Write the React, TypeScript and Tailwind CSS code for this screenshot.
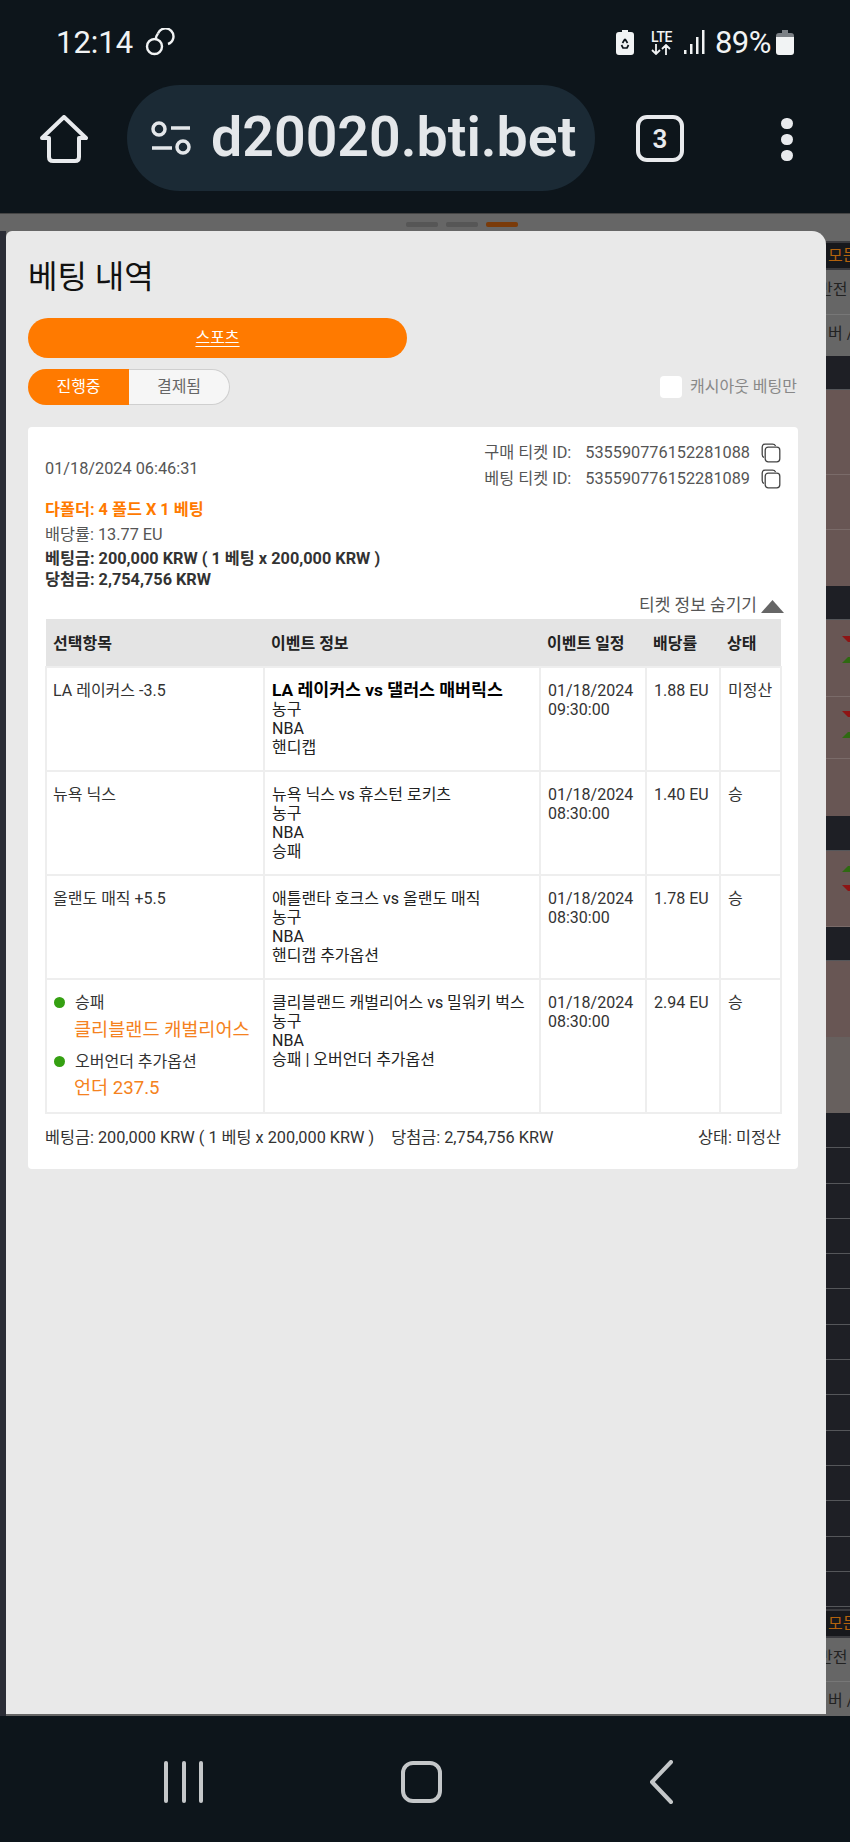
import React from "react";

const FONT = "font-['Roboto','Noto_Sans_CJK_KR',sans-serif]";

function CopyIcon() {
  return (
    <svg width="20" height="20" viewBox="0 0 20 20" fill="none" stroke="#444" strokeWidth="1.3">
      <path d="M3 14.5 C1.8 13.8 1.2 13 1.2 11.5 V4 C1.2 2.2 2.2 1.2 4 1.2 H11.5 C13 1.2 14 1.8 14.6 3" />
      <rect x="4.2" y="4.2" width="14.6" height="14.6" rx="3" />
    </svg>
  );
}

function Arrow({ dir }: { dir: "up" | "down" }) {
  return (
    <svg width="8" height="6" viewBox="0 0 8 6" className="block">
      {dir === "up" ? <path d="M0 6 L8 6 L8 0 L6 0 Z" fill="#2f6a12" /> : <path d="M0 0 L8 0 L8 6 L6 6 Z" fill="#8e1414" />}
    </svg>
  );
}

function StatusBar() {
  return (
    <div className="h-[82px] flex items-center pt-[2px] pl-[56px] pr-[56px] justify-between text-[#f1f3f4]">
      <div className="flex items-center gap-[12px]">
        <span className="text-[31px] leading-none">12:14</span>
        <svg width="30" height="28" viewBox="0 0 30 28" fill="none" stroke="#f1f3f4" strokeWidth="2.4">
          <circle cx="9.5" cy="18.5" r="7.5" />
          <path d="M13 5.5 A8 8 0 1 1 23 16" />
          <path d="M13 5.5 C11 8 10.8 9.5 11 11" />
        </svg>
      </div>
      <div className="flex items-center">
        <svg width="18" height="25" viewBox="0 0 18 25">
          <path d="M6 0h6v2h3a3 3 0 0 1 3 3v17a3 3 0 0 1-3 3H3a3 3 0 0 1-3-3V5a3 3 0 0 1 3-3h3z" fill="#f1f3f4" />
          <path d="M9 9l2.5 4M9 9l-2.5 4M5.5 15l1.5 3h4l1.500-3" stroke="#0d151b" strokeWidth="1.700" fill="none" />
        </svg>
        <div className="ml-[15px] w-[25px] flex flex-col items-center">
          <span className="text-[14px] leading-[14px] font-medium tracking-[-0.5px]">LTE</span>
          <svg width="22" height="11" viewBox="0 0 22 11" fill="none" stroke="#f1f3f4" strokeWidth="1.800">
            <path d="M6 0v10M2 6l4 4 4-4M16 11V1M12 5l4-4 4 4" />
          </svg>
        </div>
        <svg width="22" height="24" viewBox="0 0 22 24" fill="#f1f3f4" className="ml-[10px]">
          <rect x="0" y="20" width="2.500" height="4" />
          <rect x="6" y="14" width="2.500" height="10" />
          <rect x="12" y="7" width="2.500" height="17" />
          <rect x="18" y="0" width="2.500" height="24" />
        </svg>
        <span className="ml-[9px] text-[31px] leading-none tracking-[-0.5px]">89%</span>
        <svg width="18" height="25" viewBox="0 0 18 25" className="ml-[5px]">
          <path d="M6 0h6v3h3a3 3 0 0 1 3 3v1H0V6a3 3 0 0 1 3-3h3z" fill="#7b8085" />
          <path d="M0 7h18v15a3 3 0 0 1-3 3H3a3 3 0 0 1-3-3z" fill="#f1f3f4" />
        </svg>
      </div>
    </div>
  );
}

function UrlBar() {
  return (
    <div className="h-[109px] flex items-start pt-[3px]">
      <svg width="48" height="48" viewBox="0 0 48 48" fill="none" stroke="#e8eaed" strokeWidth="4" strokeLinejoin="round" className="ml-[40px] mt-[30px]">
        <path d="M2 23 L24 2 L46 23 H39 V42 Q39 46 35 46 H13 Q9 46 9 42 V23 Z" />
      </svg>
      <div className="ml-[39px] w-[468px] h-[106px] rounded-full bg-[#1b2a35] flex items-center pl-[24px]">
        <svg width="40" height="34" viewBox="0 0 40 34" fill="none" stroke="#e4e7ea" strokeWidth="3.500">
          <circle cx="8" cy="8" r="6" />
          <path d="M20 7h19M1 27h20" />
          <circle cx="32" cy="26" r="6" />
        </svg>
        <span className="ml-[20px] text-[55.500px] leading-none font-semibold text-[#e4e7ea]">d20020.bti.bet</span>
      </div>
      <div className="ml-[41px] mt-[30px] w-[48px] h-[47px] rounded-[11px] border-[4px] border-[#e8eaed] flex items-center justify-center text-[#e8eaed] text-[26px] font-semibold leading-none">
        3
      </div>
      <div className="ml-[97px] mt-[33px] flex flex-col gap-[5px]">
        <div className="w-[12px] h-[11px] rounded-full bg-[#e8eaed]" />
        <div className="w-[12px] h-[11px] rounded-full bg-[#e8eaed]" />
        <div className="w-[12px] h-[11px] rounded-full bg-[#e8eaed]" />
      </div>
    </div>
  );
}

function RightStrip() {
  const dark = "bg-[#1e1f25] border-b border-[#55565a] shrink-0";
  const brown = "bg-[#685654] border-b border-[#7a6b69] shrink-0";
  const band = (
    <div className="h-[29px] shrink-0 bg-[#17181c] border-y-2 border-[#3a3a3e] overflow-hidden whitespace-nowrap pl-[2px] text-[16px] leading-[25px] text-[#b3620d]">모든</div>
  );
  return (
    <div className="w-[24px] flex flex-col overflow-hidden bg-[#666]">
      <div className="h-[10px] shrink-0" />
      {band}
      <div className="h-[45px] shrink-0 border-b border-[#777] overflow-hidden whitespace-nowrap text-[16px] leading-[40px] text-[#222] -ml-[8px]">반전</div>
      <div className="h-[41px] shrink-0 overflow-hidden whitespace-nowrap text-[16px] leading-[38px] text-[#222] pl-[2px]">버 /</div>
      <div className={`h-[34px] ${dark}`} />
      <div className={`h-[85px] ${brown}`} />
      <div className={`h-[55px] ${brown}`} />
      <div className="h-[56px] shrink-0 bg-[#685654]" />
      <div className={`h-[34px] ${dark}`} />
      <div className={`h-[77px] ${brown} flex flex-col items-end gap-[15px] pt-[16px]`}>
        <Arrow dir="down" />
        <Arrow dir="up" />
      </div>
      <div className={`h-[62px] ${brown} flex flex-col items-end gap-[15px] pt-[14px]`}>
        <Arrow dir="down" />
        <Arrow dir="up" />
      </div>
      <div className="h-[57px] shrink-0 bg-[#685654]" />
      <div className={`h-[35px] ${dark}`} />
      <div className={`h-[76px] ${brown} flex flex-col items-end gap-[13px] pt-[15px]`}>
        <Arrow dir="up" />
        <Arrow dir="down" />
      </div>
      <div className={`h-[34px] ${dark}`} />
      <div className="h-[76px] shrink-0 bg-[#685654]" />
      <div className="h-[76px] shrink-0 bg-[#67605e]" />
      {Array.from({ length: 14 }).map((_, i) => (
        <div key={i} className={`h-[35.300px] ${dark}`} />
      ))}
      <div className="h-[2px] shrink-0 bg-[#1e1f25]" />
      {band}
      <div className="h-[44px] shrink-0 border-b border-[#777] overflow-hidden whitespace-nowrap text-[16px] leading-[40px] text-[#222] -ml-[8px]">반전</div>
      <div className="h-[34px] shrink-0 overflow-hidden whitespace-nowrap text-[16px] leading-[38px] text-[#222] pl-[2px]">버 /</div>
    </div>
  );
}

const TH = "bg-[#e4e4e4] h-[48px] px-[7px] pt-[2px] text-left text-[16px] font-bold text-[#222] align-middle";
const TD = "border-2 border-[#eeeeee] px-[7px] pt-[13px] align-top text-[16px] leading-[19px] text-[#333]";
const TD1 = "border-2 border-[#eeeeee] pl-[6px] pr-[7px] pt-[13px] align-top text-[16px] leading-[19px] text-[#333]";

function Row({ pick, title, bold, market, date, time, odds, status }: { pick: string; title: string; bold?: boolean; market: string; date: string; time: string; odds: string; status: string }) {
  return (
    <tr className="h-[104px]">
      <td className={TD1}>{pick}</td>
      <td className={TD}>
        <div className={bold ? "font-bold text-[17.300px] text-black whitespace-nowrap" : "text-[#222]"}>{title}</div>
        <div className="text-[#222]">농구</div>
        <div className="text-[#222]">NBA</div>
        <div className="text-[#222]">{market}</div>
      </td>
      <td className={TD}>
        <div>{date}</div>
        <div>{time}</div>
      </td>
      <td className={TD}>{odds}</td>
      <td className={TD}>{status}</td>
    </tr>
  );
}

function Ticket() {
  return (
    <div className="ml-[22px] w-[770px] h-[742px] bg-white rounded-[4px] mt-[22px] px-[17px] pt-[13px] shrink-0">
      <div className="flex justify-between items-center h-[52px]">
        <span className="pt-[6px] text-[16.300px] text-[#555]">01/18/2024 06:46:31</span>
        <div className="flex flex-col text-[16.300px] text-[#555] items-end">
          {[
            ["구매 티켓 ID:", "535590776152281088"],
            ["베팅 티켓 ID:", "535590776152281089"],
          ].map(([a, b]) => (
            <div key={b} className="h-[26px] flex items-center">
              <span>{a}</span>
              <span className="ml-[14px]">{b}</span>
              <span className="ml-[11px]">
                <CopyIcon />
              </span>
            </div>
          ))}
        </div>
      </div>
      <div className="mt-[6px] text-[16.300px]">
        <div className="h-[24px] leading-[24px] font-bold text-[#ff7a00]">다폴더: 4 폴드 X 1 베팅</div>
        <div className="h-[24px] leading-[25px] text-[#555]">배당률: 13.77 EU</div>
        <div className="h-[24px] leading-[25px] font-bold text-[#333]">베팅금: 200,000 KRW ( 1 베팅 x 200,000 KRW )</div>
        <div className="h-[22px] leading-[20px] font-bold text-[#333]">당첨금: 2,754,756 KRW</div>
      </div>
      <div className="h-[26px] mt-[1px] flex items-center justify-end text-[17px] text-[#555] -mr-[3px]">
        <span>티켓 정보 숨기기</span>
        <svg width="23" height="13" viewBox="0 0 23 13" className="ml-[4px]">
          <path d="M11.500 0 L23 13 H0 Z" fill="#666" />
        </svg>
      </div>
      <table className="table-fixed border-collapse w-[735px]">
        <thead>
          <tr>
            <th className={`${TH} w-[218px]`}>선택항목</th>
            <th className={`${TH} w-[276px]`}>이벤트 정보</th>
            <th className={`${TH} w-[106px]`}>이벤트 일정</th>
            <th className={`${TH} w-[74px]`}>배당률</th>
            <th className={`${TH} w-[61px]`}>상태</th>
          </tr>
        </thead>
        <tbody>
          <Row pick="LA 레이커스 -3.5" title="LA 레이커스 vs 댈러스 매버릭스" bold market="핸디캡" date="01/18/2024" time="09:30:00" odds="1.88 EU" status="미정산" />
          <Row pick="뉴욕 닉스" title="뉴욕 닉스 vs 휴스턴 로키츠" market="승패" date="01/18/2024" time="08:30:00" odds="1.40 EU" status="승" />
          <Row pick="올랜도 매직 +5.5" title="애틀랜타 호크스 vs 올랜도 매직" market="핸디캡 추가옵션" date="01/18/2024" time="08:30:00" odds="1.78 EU" status="승" />
          <tr className="h-[134px]">
            <td className={TD1}>
              <div className="flex items-center h-[19px] pl-[1px]">
                <span className="w-[11px] h-[11px] rounded-full bg-[#35a012]" />
                <span className="ml-[10px]">승패</span>
              </div>
              <div className="ml-[21px] mt-[6px] text-[18.600px] leading-[24px] text-[#f58220] whitespace-nowrap">클리블랜드 캐벌리어스</div>
              <div className="flex items-center h-[19px] mt-[10px] pl-[1px]">
                <span className="w-[11px] h-[11px] rounded-full bg-[#35a012]" />
                <span className="ml-[10px]">오버언더 추가옵션</span>
              </div>
              <div className="ml-[21px] mt-[5px] text-[18.600px] leading-[24px] text-[#f58220] whitespace-nowrap">언더 237.5</div>
            </td>
            <td className={TD}>
              <div className="text-[#222]">클리블랜드 캐벌리어스 vs 밀워키 벅스</div>
              <div className="text-[#222]">농구</div>
              <div className="text-[#222]">NBA</div>
              <div className="text-[#222]">승패 | 오버언더 추가옵션</div>
            </td>
            <td className={TD}>
              <div>01/18/2024</div>
              <div>08:30:00</div>
            </td>
            <td className={TD}>2.94 EU</td>
            <td className={TD}>승</td>
          </tr>
        </tbody>
      </table>
      <div className="h-[48px] flex items-center justify-between text-[16.300px] text-[#333]">
        <div className="flex gap-[17px]">
          <span>베팅금: 200,000 KRW ( 1 베팅 x 200,000 KRW )</span>
          <span>당첨금: 2,754,756 KRW</span>
        </div>
        <span>상태: 미정산</span>
      </div>
    </div>
  );
}

function Modal() {
  return (
    <div className="w-[820px] h-[1483px] bg-[#e9e9e9] rounded-tl-[6px] rounded-tr-[14px] flex flex-col">
      <h1 className="ml-[22px] mt-[23px] text-[32px] leading-[46px] font-normal text-[#111]">베팅 내역</h1>
      <div className="ml-[22px] mt-[18px] w-[379px] h-[40px] rounded-full bg-[#ff7a00] flex items-center justify-center text-white text-[16px] underline underline-offset-[3px]">스포츠</div>
      <div className="ml-[22px] mt-[11px] mr-[29px] flex items-center justify-between h-[36px]">
        <div className="flex h-[36px] text-[16px]">
          <div className="w-[101px] rounded-l-full bg-[#ff7a00] text-white flex items-center justify-center">진행중</div>
          <div className="w-[101px] rounded-r-full bg-[#f6f6f6] border border-l-0 border-[#cfcfcf] text-[#666] flex items-center justify-center">결제됨</div>
        </div>
        <div className="flex items-center">
          <div className="w-[22px] h-[22px] rounded-[4px] bg-white" />
          <span className="ml-[8px] text-[16px] text-[#888]">캐시아웃 베팅만</span>
        </div>
      </div>
      <Ticket />
    </div>
  );
}

export default function App() {
  return (
    <div className={`w-[850px] h-[1842px] bg-[#0d151b] flex flex-col overflow-hidden ${FONT}`}>
      <div className="h-[213px] shrink-0 flex flex-col">
        <StatusBar />
        <UrlBar />
      </div>
      <div className="h-[1503px] shrink-0 bg-[#666] flex flex-col">
        <div className="h-[18px] shrink-0 flex items-center justify-center gap-[8px] border-t border-[#444] pt-[3px]">
          <div className="w-[32px] h-[5px] rounded-[2px] bg-[#565656] ml-[74px]" />
          <div className="w-[32px] h-[5px] rounded-[2px] bg-[#565656]" />
          <div className="w-[32px] h-[5px] rounded-[2px] bg-[#7a3b0a]" />
        </div>
        <div className="flex flex-1 min-h-0">
          <div className="w-[6px] bg-[#2b2d36]" />
          <Modal />
          <RightStrip />
        </div>
      </div>
      <div className="flex-1">
        <div className="flex items-start pt-[45px] pl-[164px]">
          <div className="flex gap-[13.500px]">
            <div className="w-[4px] h-[42px] rounded-full bg-[#c4c7c9]" />
            <div className="w-[4px] h-[42px] rounded-full bg-[#c4c7c9]" />
            <div className="w-[4px] h-[42px] rounded-full bg-[#c4c7c9]" />
          </div>
          <div className="ml-[198px] w-[41px] h-[42px] rounded-[12px] border-[4px] border-[#c4c7c9]" />
          <svg width="24" height="44" viewBox="0 0 24 44" fill="none" stroke="#c4c7c9" strokeWidth="4" strokeLinecap="round" strokeLinejoin="round" className="ml-[207px] -mt-[1px]">
            <path d="M22 2 L3 22 L22 42" />
          </svg>
        </div>
      </div>
    </div>
  );
}
